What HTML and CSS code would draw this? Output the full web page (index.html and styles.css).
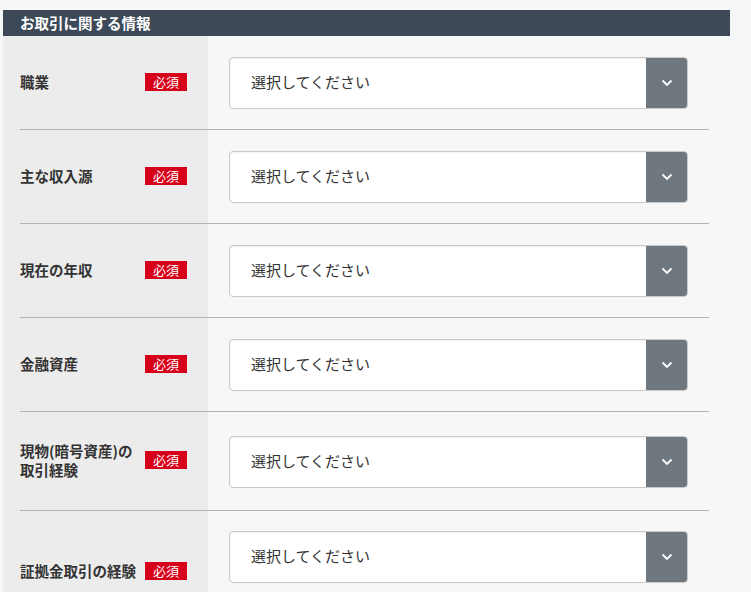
FILE: index.html
```html
<!DOCTYPE html>
<html lang="ja">
<head>
<meta charset="utf-8">
<title>お取引に関する情報</title>
<link rel="stylesheet" href="styles.css">
</head>
<body>
<div class="page">
  <section class="section">
    <h2 class="section-title">お取引に関する情報</h2>
    <div class="section-body">
      <div class="row">
        <div class="label"><span class="label-text">職業</span><span class="badge">必須</span></div>
        <div class="field"><div class="select"><span class="placeholder">選択してください</span><span class="select-btn"><svg width="12" height="8" viewBox="0 0 12 8"><path d="M1.5 1.5 L6 6 L10.5 1.5" fill="none" stroke="#fff" stroke-width="1.8"/></svg></span></div></div>
      </div>
      <div class="row">
        <div class="label"><span class="label-text">主な収入源</span><span class="badge">必須</span></div>
        <div class="field"><div class="select"><span class="placeholder">選択してください</span><span class="select-btn"><svg width="12" height="8" viewBox="0 0 12 8"><path d="M1.5 1.5 L6 6 L10.5 1.5" fill="none" stroke="#fff" stroke-width="1.8"/></svg></span></div></div>
      </div>
      <div class="row">
        <div class="label"><span class="label-text">現在の年収</span><span class="badge">必須</span></div>
        <div class="field"><div class="select"><span class="placeholder">選択してください</span><span class="select-btn"><svg width="12" height="8" viewBox="0 0 12 8"><path d="M1.5 1.5 L6 6 L10.5 1.5" fill="none" stroke="#fff" stroke-width="1.8"/></svg></span></div></div>
      </div>
      <div class="row">
        <div class="label"><span class="label-text">金融資産</span><span class="badge">必須</span></div>
        <div class="field"><div class="select"><span class="placeholder">選択してください</span><span class="select-btn"><svg width="12" height="8" viewBox="0 0 12 8"><path d="M1.5 1.5 L6 6 L10.5 1.5" fill="none" stroke="#fff" stroke-width="1.8"/></svg></span></div></div>
      </div>
      <div class="row">
        <div class="label"><span class="label-text">現物(暗号資産)の<br>取引経験</span><span class="badge">必須</span></div>
        <div class="field"><div class="select"><span class="placeholder">選択してください</span><span class="select-btn"><svg width="12" height="8" viewBox="0 0 12 8"><path d="M1.5 1.5 L6 6 L10.5 1.5" fill="none" stroke="#fff" stroke-width="1.8"/></svg></span></div></div>
      </div>
      <div class="row row--last">
        <div class="label label--low"><span class="label-text">証拠金取引の経験</span><span class="badge">必須</span></div>
        <div class="field field--top"><div class="select"><span class="placeholder">選択してください</span><span class="select-btn"><svg width="12" height="8" viewBox="0 0 12 8"><path d="M1.5 1.5 L6 6 L10.5 1.5" fill="none" stroke="#fff" stroke-width="1.8"/></svg></span></div></div>
      </div>
    </div>
  </section>
</div>
</body>
</html>
```

FILE: styles.css
```css
html, body {
  margin: 0;
  padding: 0;
}
body {
  background: #ffffff;
  font-family: "Noto Sans CJK JP", "Noto Sans", sans-serif;
  color: #333;
}
.page {
  height: 592px;
  background: #f5f6f8;
  padding: 10px 21px 0 3px;
  box-sizing: border-box;
  overflow: hidden;
}
.section {
  width: 727px;
  background: #f7f7f7;
  height: 100%;
  display: flex;
  flex-direction: column;
}
.section-title {
  margin: 0;
  height: 26px;
  background: #3d4958;
  color: #fff;
  font-size: 14.5px;
  font-weight: bold;
  line-height: 25px;
  padding-left: 17px;
}
.section-body {
  flex: 1;
  background: linear-gradient(to right, #ececec 205px, #f7f7f7 205px);
  overflow: hidden;
}
.row {
  margin: 0 21px 0 17px;
  padding-right: 21px;
  display: grid;
  grid-template-columns: 168px 1fr;
  column-gap: 41px;
  align-items: center;
  border-bottom: 1px solid #b3b3b3;
}
.row--last {
  border-bottom: none;
  align-items: start;
}
.label {
  display: flex;
  align-items: center;
  padding: 29px 1px 31px 0;
}
.label--low {
  padding-top: 50px;
}
.label-text {
  flex: 1;
  font-size: 14.5px;
  font-weight: bold;
  line-height: 19px;
  color: #333;
}
.badge {
  width: 42px;
  height: 18px;
  background: #d7001a;
  color: #fff;
  font-size: 13px;
  line-height: 18px;
  text-align: center;
}
.field {
  padding: 21px 0 20px;
}
.field--top {
  padding-top: 20px;
}
.select {
  display: flex;
  height: 52px;
  box-sizing: border-box;
  background: #fff;
  border: 1px solid #c9c9c9;
  border-radius: 4px;
  box-shadow: inset 0 1px 2px rgba(0,0,0,0.06);
  overflow: hidden;
}
.placeholder {
  flex: 1;
  padding-left: 21px;
  font-size: 15px;
  line-height: 48px;
  color: #333;
}
.select-btn {
  width: 41px;
  background: #6f777f;
  display: flex;
  align-items: center;
  justify-content: center;
}
```
